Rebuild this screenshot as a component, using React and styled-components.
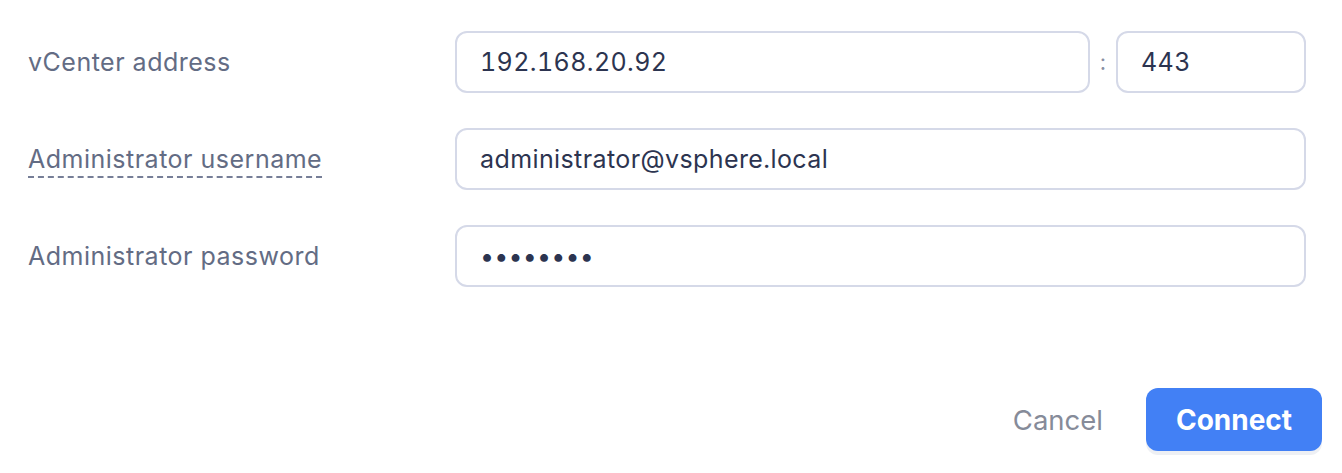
import React from 'react';
import styled, { createGlobalStyle } from 'styled-components';

const GlobalStyle = createGlobalStyle`
  body {
    margin: 0;
    background: #ffffff;
    font-family: 'Inter', 'Liberation Sans', sans-serif;
  }
`;

const App = () => {
  return (
    <>
      <GlobalStyle />
      <Dialog>
        <Form>
          <Label>vCenter address</Label>
          <InputGroup>
            <Input defaultValue='192.168.20.92' />
            <Colon>:</Colon>
            <Input defaultValue='443' $width='190px' />
          </InputGroup>

          <Label>
            <Hint>Administrator username</Hint>
          </Label>
          <Input defaultValue='administrator@vsphere.local' />

          <Label>Administrator password</Label>
          <Input type='password' defaultValue='password' $secret />
        </Form>

        <Footer>
          <CancelButton>Cancel</CancelButton>
          <ConnectButton>Connect</ConnectButton>
        </Footer>
      </Dialog>
    </>
  );
};

const Dialog = styled.div`
  width: 1342px;
  height: 473px;
  box-sizing: border-box;
  padding: 31px 20px 0 28px;
  display: flex;
  flex-direction: column;
`;

const Form = styled.div`
  display: grid;
  grid-template-columns: 427px 1fr;
  row-gap: 35px;
  align-items: center;
  padding-right: 16px;
`;

const Label = styled.div`
  font-size: 25px;
  color: #636c84;
  letter-spacing: 0.5px;
`;

const Hint = styled.span`
  border-bottom: 2px dashed #767e97;
  padding-bottom: 2px;
`;

const InputGroup = styled.div`
  display: flex;
  align-items: center;
`;

const Colon = styled.span`
  flex: none;
  width: 26px;
  text-align: center;
  font-size: 22px;
  color: #8a90a3;
`;

const Input = styled.input`
  box-sizing: border-box;
  height: 62px;
  flex: ${(p) => (p.$width ? `0 0 ${p.$width}` : '1 1 0')};
  width: ${(p) => p.$width || '100%'};
  min-width: 0;
  border: 2px solid #d5d9e8;
  border-radius: 12px;
  padding: 0 24px 0 23px;
  font-family: 'Inter', 'Liberation Sans', sans-serif;
  font-size: 25px;
  font-variant-numeric: tabular-nums;
  color: #2c3450;
  letter-spacing: ${(p) => (p.$secret ? '0.2px' : '0.4px')};
  outline: none;
  background: #ffffff;
`;

const Footer = styled.div`
  margin-top: 101px;
  display: flex;
  justify-content: flex-end;
  align-items: center;
  gap: 43px;
`;

const CancelButton = styled.button`
  border: none;
  background: none;
  padding: 0;
  font-family: 'Inter', 'Liberation Sans', sans-serif;
  font-size: 27.5px;
  color: #868b99;
  cursor: pointer;
`;

const ConnectButton = styled.button`
  width: 176px;
  height: 63px;
  border: none;
  border-radius: 12px;
  background: #4280f5;
  color: #ffffff;
  font-family: 'Inter', 'Liberation Sans', sans-serif;
  font-size: 28px;
  font-weight: 700;
  box-shadow: 0 4px 0 #eef0f4;
  cursor: pointer;
`;

export default App;
